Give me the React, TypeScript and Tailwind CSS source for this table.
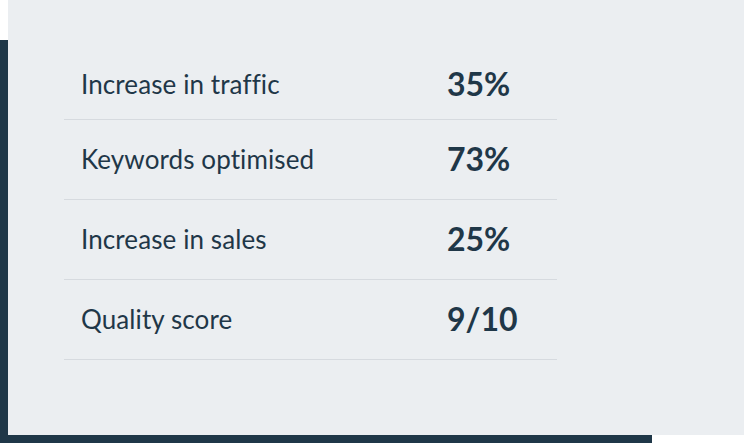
const stats = [
  { label: "Increase in traffic", value: "35%" },
  { label: "Keywords optimised", value: "73%" },
  { label: "Increase in sales", value: "25%" },
  { label: "Quality score", value: "9/10" },
];

export default function App() {
  return (
    <div className="relative h-[443px] w-[744px] overflow-hidden bg-white font-['Lato',sans-serif]">
      {/* offset backdrop */}
      <div className="absolute left-0 top-[40px] h-[403px] w-[652px] bg-[#1f3748]" />
      <div className="absolute left-[8px] top-0 h-[435px] w-[736px] bg-[#ebeef1] pl-[56px] pt-[40px]">
        <div className="w-[493px]">
          {stats.map((s, i) => (
            <div
              key={i}
              className={`flex items-center border-b border-[#d6dadf] text-[#1f3748] ${
                i === 0 ? "pb-[19px] pt-[28px]" : "pb-[24px] pt-[23px]"
              }`}
            >
              <span className="h-[32px] w-[383px] pl-[17px] text-[26px] leading-[32px] tracking-[0.1px]">
                {s.label}
              </span>
              <span className="h-[32px] text-[32px] font-bold leading-[32px]">{s.value}</span>
            </div>
          ))}
        </div>
      </div>
    </div>
  );
}
